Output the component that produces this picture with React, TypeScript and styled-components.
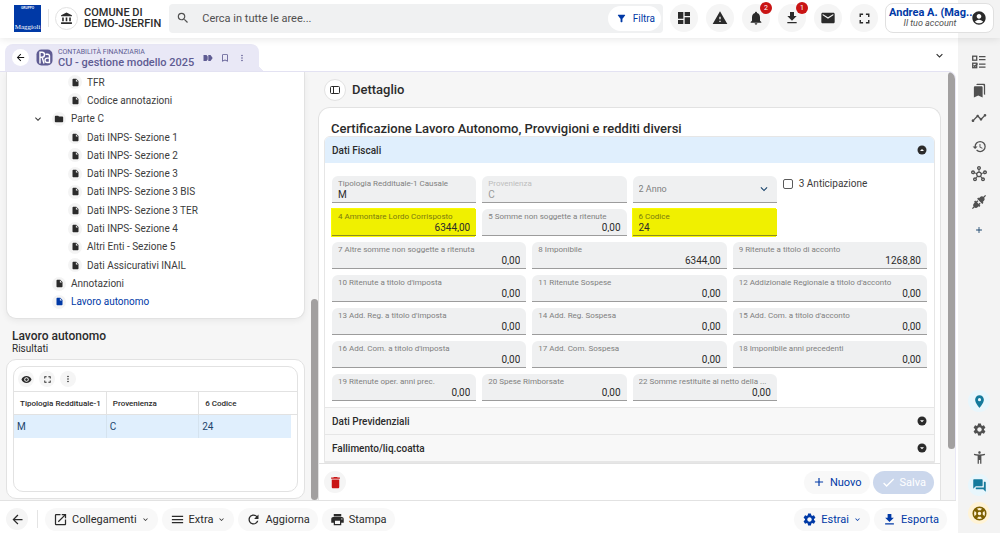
import React from "react";
import styled, { createGlobalStyle, css } from "styled-components";
import {
  MdAccountBalance, MdAccountCircle, MdAccessibilityNew, MdAdd, MdArrowBack, MdBookmarkBorder,
  MdBookmarks, MdCheck, MdDashboard, MdDelete, MdDownload, MdEmail, MdExpandMore, MdFilterAlt, MdFolder,
  MdForum, MdFullscreen, MdHistory, MdOutlineHub, MdInsertDriveFile, MdMenu, MdMoreVert,
  MdNotifications, MdOpenInNew, MdPrint, MdRefresh, MdRoom, MdSearch, MdSettings, MdTimeline,
  MdVisibility, MdWarning,
} from "react-icons/md";

const Global = createGlobalStyle`
  *, *::before, *::after { box-sizing: border-box; }
  body { margin: 0; background: #fff; color: #2b2b2b; font-family: Roboto, "Liberation Sans", sans-serif; font-size: 11px; }
  button, input, select { font: inherit; color: inherit; margin: 0; }
  button { border: 0; padding: 0; background: none; cursor: pointer; }
  h1, h2 { margin: 0; font-weight: 500; }
  ul { margin: 0; padding: 0; list-style: none; }
  a { color: inherit; text-decoration: none; }
  svg { display: block; flex: none; }
`;

const BLUE = "#0039a6";
const INDIGO = "#5f5c93";

const Shell = styled.div`
  display: flex;
  flex-direction: column;
  height: 100vh;
  min-height: 533px;
`;

/* ---------- header ---------- */
const Header = styled.header`
  position: relative;
  z-index: 1;
  display: flex;
  align-items: center;
  height: 38px;
  padding: 0 6px 2px 14px;
  background: linear-gradient(to left, #f3f3f3 42px, #fff 42px);
  box-shadow: 0 1px 8px rgba(0, 0, 0, 0.1);
`;
const Logo = styled.div`
  display: flex;
  flex-direction: column;
  justify-content: space-between;
  align-items: center;
  width: 27px;
  height: 27px;
  padding-top: 1px;
  background: ${BLUE};
  color: #fff;
  font: 700 3px/4px "Liberation Sans", sans-serif;
  overflow: hidden;
`;
const LogoName = styled.span`
  font: 7px/9px "Liberation Serif", serif;
`;
const Divider = styled.span<{ $tight?: boolean }>`
  width: 1px;
  height: 18px;
  margin: ${(p) => (p.$tight ? "0 3px 0 5px" : "0 6px 0 7px")};
  background: #e4e4e4;
`;
const Circle = styled.button<{ $size: number; $bg?: string; $outlined?: boolean }>`
  position: relative;
  display: flex;
  flex: none;
  align-items: center;
  justify-content: center;
  width: ${(p) => p.$size}px;
  height: ${(p) => p.$size}px;
  border-radius: 50%;
  background: ${(p) => p.$bg ?? "#f5f5f5"};
  ${(p) => p.$outlined && css`border: 1px solid #e2e2e2;`}
`;
const Tenant = styled.strong`
  margin: 0 8px 0 6px;
  font-size: 11px;
  line-height: 11px;
  font-weight: 500;
  white-space: nowrap;
`;
const Search = styled.label`
  display: flex;
  flex: 1;
  align-items: center;
  gap: 12px;
  height: 29px;
  padding: 0 2px 0 7px;
  border-radius: 4px;
  background: #f0f1f2;
  color: #505050;
`;
const SearchInput = styled.input`
  flex: 1;
  min-width: 0;
  padding: 0;
  border: 0;
  background: none;
  outline: 0;
  font-size: 11px;
  &::placeholder { color: #505050; opacity: 1; }
`;
const FilterButton = styled.button`
  display: flex;
  align-items: center;
  gap: 6px;
  height: 25px;
  padding: 0 6px 0 8px;
  border-radius: 13px;
  background: #fff;
  color: ${BLUE};
  font-size: 10px;
`;
const HeaderActions = styled.nav`
  display: flex;
  gap: 8px;
  margin: 0 7px;
`;
const Badge = styled.span`
  position: absolute;
  top: -2px;
  right: -2px;
  width: 12px;
  height: 12px;
  border-radius: 50%;
  background: #c91414;
  color: #fff;
  font-size: 7px;
  line-height: 12px;
  text-align: center;
`;
const Account = styled.button`
  display: flex;
  align-items: center;
  width: 109px;
  height: 30px;
  padding: 0 6px 0 3px;
  border: 1px solid #e0e0e0;
  border-radius: 8px;
  background: #fff;
`;
const AccountText = styled.span`
  display: flex;
  flex: 1;
  flex-direction: column;
  min-width: 0;
  line-height: 11px;
`;
const AccountName = styled.strong`
  color: ${BLUE};
  font-size: 11px;
  font-weight: 700;
  white-space: nowrap;
`;
const AccountHint = styled.em`
  color: #505050;
  font-size: 9px;
  text-align: center;
`;

/* ---------- frame ---------- */
const Body = styled.div`
  display: flex;
  flex: 1;
  min-height: 0;
`;
const Main = styled.div`
  display: flex;
  flex: 1;
  flex-direction: column;
  min-width: 0;
  margin-right: 2px;
`;
const TabBar = styled.div`
  display: flex;
  align-items: flex-end;
  justify-content: space-between;
  height: 33px;
  padding: 0 10px 0 5px;
`;
const Tab = styled.div`
  position: relative;
  display: flex;
  align-items: center;
  height: 27px;
  padding: 0 12px 0 7px;
  border-radius: 8px 8px 0 0;
  background: #e9e8f6;
  color: ${INDIGO};
  &::after {
    content: "";
    position: absolute;
    left: 100%;
    bottom: 0;
    width: 7px;
    height: 7px;
    background: radial-gradient(circle at top right, transparent 7px, #e9e8f6 7px);
  }
`;
const TabText = styled.div`
  margin: 0 9px 0 5px;
  line-height: 10px;
  font-size: 7px;
  white-space: nowrap;
`;
const TabTitle = styled.h1`
  font-size: 11px;
  line-height: 11px;
`;
const TabIcons = styled.div`
  display: flex;
  align-items: center;
  gap: 7px;
`;
const AppIcon = styled.span`
  display: flex;
  margin-left: 7px;
`;
const TabMenu = styled.button`
  margin-bottom: 9px;
`;
const Workspace = styled.div`
  display: flex;
  flex: 1;
  min-height: 0;
  overflow: hidden;
  border-top: 1px solid #e3e2f2;
  border-right: 1px solid #e9e8f6;
  border-top-right-radius: 8px;
  background: #f6f6f6;
`;
const ScrollTrack = styled.div<{ $end?: boolean }>`
  display: flex;
  flex: none;
  flex-direction: column;
  justify-content: ${(p) => (p.$end ? "flex-end" : "flex-start")};
  width: 7px;
`;
const ScrollThumb = styled.div<{ $share: number }>`
  height: ${(p) => p.$share}%;
  border-radius: 4px;
  background: #a2a0a0;
`;

/* ---------- left column ---------- */
const Side = styled.aside`
  display: flex;
  width: 318px;
  flex: none;
`;
const SideContent = styled.div`
  display: flex;
  flex: 1;
  flex-direction: column;
  padding: 0 6px 1px 6px;
`;
const TreeCard = styled.nav`
  padding: 1px 0 7px;
  border: 1px solid #e2e2e2;
  border-top: 0;
  border-radius: 0 0 10px 10px;
  background: #fff;
  box-shadow: 0 2px 6px rgba(0, 0, 0, 0.06);
`;
const TreeList = styled.ul`
  display: grid;
  grid-auto-rows: 1fr;
  height: 238px;
`;
const TreeRow = styled.li<{ $level: number; $active?: boolean }>`
  display: flex;
  align-items: center;
  gap: 5px;
  padding-left: ${(p) => (p.$level === 2 ? 61 : 45)}px;
  color: ${(p) => (p.$active ? BLUE : "#3c3c3c")};
  font-size: 10px;
`;
const TreeToggle = styled.button`
  margin: 0 3px 0 -20px;
`;
const TreeGlyph = styled.span<{ $active?: boolean }>`
  display: flex;
  align-items: center;
  justify-content: center;
  width: 14px;
  height: 14px;
  border-radius: 50%;
  background: #f4f4f4;
  color: ${(p) => (p.$active ? BLUE : "#2b2b2b")};
`;
const SideHeading = styled.div`
  padding: 10px 0 4px 6px;
  font-size: 10px;
  line-height: 12px;
`;
const SideTitle = styled.h2`
  font-size: 12px;
  line-height: 14px;
`;
const ResultsCard = styled.section`
  display: flex;
  flex: 1;
  padding: 6px;
  border: 1px solid #e2e2e2;
  border-radius: 10px;
  background: #fff;
`;
const ResultsBox = styled.div`
  flex: 1;
  border: 1px solid #e2e2e2;
  border-radius: 10px;
  overflow: hidden;
`;
const ResultsTools = styled.div`
  display: flex;
  gap: 5px;
  padding: 4px;
`;
const Table = styled.table`
  width: 100%;
  border-collapse: collapse;
  table-layout: fixed;
  border-top: 1px solid #e2e2e2;
`;
const Th = styled.th`
  height: 23px;
  padding: 0 0 0 6px;
  border-right: 1px solid #e2e2e2;
  border-bottom: 1px solid #e2e2e2;
  font-size: 8px;
  font-weight: 500;
  text-align: left;
  white-space: nowrap;
  overflow: hidden;
  &:nth-child(n + 3) { border-right: 0; }
`;
const Td = styled.td`
  height: 23px;
  padding: 0 0 0 3px;
  border-right: 1px solid #d5e3ef;
  background: #e0effd;
  color: #1c466e;
  font-size: 10px;
  &:nth-child(3) { border-right: 0; }
`;
const ScrollCell = styled.td`
  padding: 0;
`;

/* ---------- right column ---------- */
const Detail = styled.main`
  display: flex;
  flex: 1;
  flex-direction: column;
  min-width: 0;
`;
const DetailHead = styled.div`
  display: flex;
  align-items: center;
  gap: 6px;
  height: 35px;
  padding-left: 6px;
`;
const DetailTitle = styled.h2`
  font-size: 13px;
`;
const DetailCard = styled.section`
  display: flex;
  flex: 1;
  flex-direction: column;
  min-height: 0;
  margin-right: 7px;
  border: 1px solid #e2e2e2;
  border-bottom: 0;
  border-radius: 12px 12px 0 0;
  background: #fff;
`;
const DetailScroll = styled.div`
  flex: 1;
  min-height: 0;
  overflow: hidden;
  padding: 13px 5px 0;
`;
const FormTitle = styled.h2`
  padding-left: 7px;
  font-size: 13px;
  line-height: 15px;
`;
const Accordion = styled.div`
  border: 1px solid #e6e6e6;
  border-radius: 6px 6px 0 0;
  overflow: hidden;
`;
const AccordionHead = styled.button<{ $open?: boolean }>`
  display: flex;
  align-items: center;
  justify-content: space-between;
  width: 100%;
  height: ${(p) => (p.$open ? 26 : 27)}px;
  padding: 0 7px;
  background: ${(p) => (p.$open ? "#e0effd" : "#f8f8f8")};
  border-bottom: ${(p) => (p.$open ? "0" : "1px solid #e6e6e6")};
  font-size: 10px;
  font-weight: 500;
`;
const Form = styled.form`
  display: flex;
  flex-direction: column;
  gap: 6px;
  padding: 13px 7px 6px;
  border-bottom: 1px solid #e6e6e6;
`;
const FieldRow = styled.div<{ $cols: number }>`
  display: grid;
  grid-template-columns: repeat(${(p) => p.$cols}, minmax(0, 1fr));
  gap: 6px;
`;
const FieldBox = styled.label<{ $marked?: boolean; $disabled?: boolean }>`
  display: flex;
  flex-direction: column;
  height: 27px;
  padding: 3px 6px;
  justify-content: space-between;
  border-bottom: 1px solid #9c9c9c;
  border-radius: 6px 6px 0 0;
  background: #eff0f1;
  color: #2b2b2b;
  ${(p) => p.$disabled && css`color: #9a9a9a;`}
  ${(p) => p.$marked && css`
    border-radius: 0;
    border-bottom-color: #8e8e20;
    background: #f0f000;
    box-shadow: -1px -1px 0 #fbfb00, -1px 1px 0 #fbfb00;
  `}
`;
const FieldLabel = styled.span<{ $marked?: boolean; $disabled?: boolean }>`
  color: ${(p) => (p.$marked ? "#7a7a10" : p.$disabled ? "#bdbdbd" : "#808080")};
  font-size: 8px;
  line-height: 10px;
  white-space: nowrap;
  overflow: hidden;
  text-overflow: ellipsis;
`;
const FieldInput = styled.input<{ $right?: boolean }>`
  width: 100%;
  height: 10px;
  padding: 0;
  border: 0;
  outline: 0;
  background: none;
  font-size: 10px;
  line-height: 10px;
  text-align: ${(p) => (p.$right ? "right" : "left")};
`;
const SelectBox = styled.div`
  display: flex;
  align-items: center;
  height: 27px;
  padding: 0 6px;
  border-bottom: 1px solid #9c9c9c;
  border-radius: 6px 6px 0 0;
  background: #eff0f1;
  color: #1c466e;
`;
const Select = styled.select`
  flex: 1;
  appearance: none;
  padding: 0;
  border: 0;
  background: none;
  color: #808080;
  font-size: 9px;
`;
const CheckLabel = styled.label`
  display: flex;
  align-items: center;
  gap: 6px;
  height: 15px;
  color: #3c3c3c;
  font-size: 10px;
`;
const CheckBox = styled.input`
  appearance: none;
  width: 10px;
  height: 10px;
  border: 1px solid #5a5a5a;
  border-radius: 2px;
  background: #fff;
`;
const DetailFoot = styled.footer`
  display: flex;
  align-items: center;
  gap: 3px;
  height: 37px;
  padding: 0 6px 0 5px;
  border-top: 1px solid #e2e2e2;
`;
const Spacer = styled.span`
  flex: 1;
`;
const Pill = styled.button<{ $tone?: "blue" | "disabled" }>`
  display: flex;
  align-items: center;
  gap: 4px;
  height: 23px;
  padding: 0 8px;
  border-radius: 12px;
  background: ${(p) => (p.$tone === "disabled" ? "#cbd7ec" : "#f8f8f8")};
  color: ${(p) => (p.$tone === "blue" ? BLUE : p.$tone === "disabled" ? "#fff" : "#2b2b2b")};
  font-size: 11px;
  white-space: nowrap;
`;
const BottomBar = styled.footer`
  display: flex;
  align-items: center;
  gap: 4px;
  height: 33px;
  padding: 4px 9px 0 6px;
  border-top: 1px solid #e2e2e2;
`;

/* ---------- right rail ---------- */
const Rail = styled.nav`
  display: flex;
  flex-direction: column;
  align-items: center;
  gap: 6px;
  width: 42px;
  padding: 13px 0 9px;
  background: #f3f3f3;
  color: #505050;
`;

type FieldProps = { label: string; value: string; left?: boolean; marked?: boolean; disabled?: boolean };
const Field = ({ label, value, left, marked, disabled }: FieldProps) => (
  <FieldBox $marked={marked} $disabled={disabled}>
    <FieldLabel $marked={marked} $disabled={disabled}>{label}</FieldLabel>
    <FieldInput $right={!left} defaultValue={value} disabled={disabled} />
  </FieldBox>
);

const AppGlyph = () => (
  <svg width="17" height="17" viewBox="0 0 17 17" fill="none">
    <rect x="0.5" y="0.5" width="16" height="16" rx="5" fill={INDIGO} />
    <g stroke="#fff" strokeWidth="1.4">
      <path d="M4 14.500V3.200H6a2.300 2.300 0 0 1 0 5H4M6.200 8.500L8 14.500" />
      <path d="M9.500 5.200h2.200a1.800 1.800 0 0 1 1.800 1.800V13.500h-2.300a2.200 2.200 0 0 1 0-4.400h2.300" />
    </g>
  </svg>
);
const DoubleTagGlyph = () => (
  <svg width="10" height="10" viewBox="0 0 10 10" fill="currentColor">
    <path d="M0.500 2h3l1.200 1.500v3L3.500 8h-3zM5.300 2h2.200L9.700 5 7.500 8H5.300z" />
  </svg>
);
const TaskListGlyph = () => (
  <svg width="16" height="16" viewBox="0 0 16 16" fill="none" stroke="currentColor" strokeWidth="1.300">
    <rect x="1.700" y="2.200" width="4" height="4" />
    <rect x="1.700" y="9.200" width="4" height="4.500" />
    <path d="M2.500 11.300l1.200 1.200L6.500 9.500M8 2.700h6.500M8 5.700h6.500M8 10.200h6.500M8 13.200h6.500" />
  </svg>
);
const PlugGlyph = () => (
  <svg width="16" height="16" viewBox="0 0 24 24" fill="currentColor">
    <g transform="rotate(45 12 12)">
      <rect x="11" y="-2" width="2" height="6" />
      <path d="M8 8V6a4 4 0 0 1 8 0v2h1.500v2.500h-11V8z" />
      <rect x="8.500" y="12" width="2" height="4" />
      <rect x="13.500" y="12" width="2" height="4" />
      <path d="M6.500 14.500h11V17H16v1.500a4 4 0 0 1-8 0V17H6.500z" />
      <rect x="11" y="20" width="2" height="6" />
    </g>
  </svg>
);
const PanelGlyph = () => (
  <svg width="10" height="10" viewBox="0 0 10 10" fill="none" stroke="#2b2b2b">
    <rect x="0.500" y="1.500" width="9" height="7" rx="1" />
    <path d="M3.500 1.500v7" />
  </svg>
);
const CaretGlyph = ({ up }: { up?: boolean }) => (
  <svg width="10" height="10" viewBox="0 0 10 10">
    <circle cx="5" cy="5" r="4.500" fill="#2b2b2b" />
    <path d={up ? "M3 6l2-2 2 2z" : "M3 4.300h4l-2 2z"} fill="#fff" />
  </svg>
);
const LifebuoyGlyph = () => (
  <svg width="15" height="15" viewBox="0 0 24 24" fill="none" stroke="#7d6000">
    <circle cx="12" cy="12" r="10" strokeWidth="2.500" />
    <circle cx="12" cy="12" r="4" strokeWidth="2.500" />
    <path d="M5 5l4 4M19 5l-4 4M5 19l4-4M19 19l-4-4" strokeWidth="5" />
  </svg>
);

const tree = [
  { label: "TFR", level: 2 },
  { label: "Codice annotazioni", level: 2 },
  { label: "Parte C", level: 1, folder: true },
  { label: "Dati INPS- Sezione 1", level: 2 },
  { label: "Dati INPS- Sezione 2", level: 2 },
  { label: "Dati INPS- Sezione 3", level: 2 },
  { label: "Dati INPS- Sezione 3 BIS", level: 2 },
  { label: "Dati INPS- Sezione 3 TER", level: 2 },
  { label: "Dati INPS- Sezione 4", level: 2 },
  { label: "Altri Enti - Sezione 5", level: 2 },
  { label: "Dati Assicurativi INAIL", level: 2 },
  { label: "Annotazioni", level: 1 },
  { label: "Lavoro autonomo", level: 1, active: true },
];

const amounts: [string, string][][] = [
  [["7 Altre somme non soggette a ritenuta", "0,00"], ["8 Imponibile", "6344,00"], ["9 Ritenute a titolo di acconto", "1268,80"]],
  [["10 Ritenute a titolo d'imposta", "0,00"], ["11 Ritenute Sospese", "0,00"], ["12 Addizionale Regionale a titolo d'acconto", "0,00"]],
  [["13 Add. Reg. a titolo d'imposta", "0,00"], ["14 Add. Reg. Sospesa", "0,00"], ["15 Add. Com. a titolo d'acconto", "0,00"]],
  [["16 Add. Com. a titolo d'imposta", "0,00"], ["17 Add. Com. Sospesa", "0,00"], ["18 Imponibile anni precedenti", "0,00"]],
];

export default function App() {
  return (
    <Shell>
      <Global />
      <Header>
        <Logo>GRUPPO<LogoName>Maggioli</LogoName></Logo>
        <Divider />
        <Circle $size={23} $bg="#fff" $outlined aria-label="Ente"><MdAccountBalance size={13} /></Circle>
        <Tenant>COMUNE DI<br />DEMO-JSERFIN</Tenant>
        <Search>
          <MdSearch size={14} />
          <SearchInput placeholder="Cerca in tutte le aree..." aria-label="Cerca" />
          <FilterButton type="button"><MdFilterAlt size={11} />Filtra</FilterButton>
        </Search>
        <HeaderActions>
          <Circle $size={28} aria-label="Cruscotto"><MdDashboard size={16} /></Circle>
          <Circle $size={28} aria-label="Avvisi"><MdWarning size={16} /></Circle>
          <Circle $size={28} aria-label="Notifiche"><MdNotifications size={16} /><Badge>2</Badge></Circle>
          <Circle $size={28} aria-label="Download"><MdDownload size={16} /><Badge>1</Badge></Circle>
          <Circle $size={28} aria-label="Messaggi"><MdEmail size={16} /></Circle>
          <Circle $size={28} aria-label="Schermo intero"><MdFullscreen size={17} /></Circle>
        </HeaderActions>
        <Account>
          <AccountText>
            <AccountName>Andrea A. (Mag...</AccountName>
            <AccountHint>Il tuo account</AccountHint>
          </AccountText>
          <MdAccountCircle size={16} />
        </Account>
      </Header>

      <Body>
        <Main>
          <TabBar>
            <Tab>
              <Circle $size={17} $bg="#fff" aria-label="Indietro"><MdArrowBack size={11} color="#111" /></Circle>
              <AppIcon><AppGlyph /></AppIcon>
              <TabText>CONTABILITÀ FINANZIARIA<TabTitle>CU - gestione modello 2025</TabTitle></TabText>
              <TabIcons>
                <DoubleTagGlyph />
                <MdBookmarkBorder size={10} />
                <MdMoreVert size={10} />
              </TabIcons>
            </Tab>
            <TabMenu aria-label="Apri schede"><MdExpandMore size={13} /></TabMenu>
          </TabBar>

          <Workspace>
            <Side>
              <SideContent>
                <TreeCard>
                  <TreeList>
                    {tree.map((n) => (
                      <TreeRow key={n.label} $level={n.level} $active={n.active}>
                        {n.folder && <TreeToggle aria-label="Comprimi"><MdExpandMore size={12} /></TreeToggle>}
                        <TreeGlyph $active={n.active}>
                          {n.folder ? <MdFolder size={10} /> : <MdInsertDriveFile size={9} />}
                        </TreeGlyph>
                        <a href="#">{n.label}</a>
                      </TreeRow>
                    ))}
                  </TreeList>
                </TreeCard>
                <SideHeading><SideTitle>Lavoro autonomo</SideTitle>Risultati</SideHeading>
                <ResultsCard>
                  <ResultsBox>
                    <ResultsTools>
                      <Circle $size={16} aria-label="Visualizza"><MdVisibility size={11} /></Circle>
                      <Circle $size={16} aria-label="Espandi"><MdFullscreen size={11} /></Circle>
                      <Circle $size={16} aria-label="Altro"><MdMoreVert size={10} /></Circle>
                    </ResultsTools>
                    <Table>
                      <colgroup><col /><col /><col /><col width="6" /></colgroup>
                      <thead><tr><Th>Tipologia Reddituale-1</Th><Th>Provenienza</Th><Th>6 Codice</Th><Th aria-hidden /></tr></thead>
                      <tbody><tr><Td>M</Td><Td>C</Td><Td>24</Td><ScrollCell /></tr></tbody>
                    </Table>
                  </ResultsBox>
                </ResultsCard>
              </SideContent>
              <ScrollTrack $end><ScrollThumb $share={47} /></ScrollTrack>
            </Side>

            <Detail>
              <DetailHead>
                <Circle $size={22} $bg="#fff" $outlined aria-label="Pannello"><PanelGlyph /></Circle>
                <DetailTitle>Dettaglio</DetailTitle>
              </DetailHead>
              <DetailCard>
                <DetailScroll>
                  <FormTitle>Certificazione Lavoro Autonomo, Provvigioni e redditi diversi</FormTitle>
                  <Accordion>
                    <AccordionHead $open>Dati Fiscali<CaretGlyph up /></AccordionHead>
                    <Form>
                      <FieldRow $cols={4}>
                        <Field label="Tipologia Reddituale-1 Causale" value="M" left />
                        <Field label="Provenienza" value="C" left disabled />
                        <SelectBox>
                          <Select aria-label="2 Anno"><option>2 Anno</option></Select>
                          <MdExpandMore size={14} />
                        </SelectBox>
                        <CheckLabel><CheckBox type="checkbox" />3 Anticipazione</CheckLabel>
                      </FieldRow>
                      <FieldRow $cols={4}>
                        <Field label="4 Ammontare Lordo Corrisposto" value="6344,00" marked />
                        <Field label="5 Somme non soggette a ritenute" value="0,00" />
                        <Field label="6 Codice" value="24" left marked />
                      </FieldRow>
                      {amounts.map((row, i) => (
                        <FieldRow key={i} $cols={3}>
                          {row.map(([label, value]) => <Field key={label} label={label} value={value} />)}
                        </FieldRow>
                      ))}
                      <FieldRow $cols={4}>
                        <Field label="19 Ritenute oper. anni prec." value="0,00" />
                        <Field label="20 Spese Rimborsate" value="0,00" />
                        <Field label="22 Somme restituite al netto della ..." value="0,00" />
                      </FieldRow>
                    </Form>
                    <AccordionHead>Dati Previdenziali<CaretGlyph /></AccordionHead>
                    <AccordionHead>Fallimento/liq.coatta<CaretGlyph /></AccordionHead>
                  </Accordion>
                </DetailScroll>
                <DetailFoot>
                  <Circle $size={22} aria-label="Elimina"><MdDelete size={15} color="#c91414" /></Circle>
                  <Spacer />
                  <Pill $tone="blue"><MdAdd size={14} />Nuovo</Pill>
                  <Pill $tone="disabled" disabled><MdCheck size={15} />Salva</Pill>
                </DetailFoot>
              </DetailCard>
            </Detail>
            <ScrollTrack><ScrollThumb $share={88} /></ScrollTrack>
          </Workspace>

          <BottomBar>
            <Circle $size={22} aria-label="Torna indietro"><MdArrowBack size={15} /></Circle>
            <Divider $tight />
            <Pill><MdOpenInNew size={15} />Collegamenti<MdExpandMore size={9} /></Pill>
            <Pill><MdMenu size={15} />Extra<MdExpandMore size={9} /></Pill>
            <Pill><MdRefresh size={15} />Aggiorna</Pill>
            <Pill><MdPrint size={15} />Stampa</Pill>
            <Spacer />
            <Pill $tone="blue"><MdSettings size={15} />Estrai<MdExpandMore size={9} /></Pill>
            <Pill $tone="blue"><MdDownload size={15} />Esporta</Pill>
          </BottomBar>
        </Main>

        <Rail>
          <Circle $size={22} $bg="none" aria-label="Attività"><TaskListGlyph /></Circle>
          <Circle $size={22} $bg="none" aria-label="Segnalibri"><MdBookmarks size={15} /></Circle>
          <Circle $size={22} $bg="none" aria-label="Andamento"><MdTimeline size={16} /></Circle>
          <Circle $size={22} $bg="none" aria-label="Cronologia"><MdHistory size={15} /></Circle>
          <Circle $size={22} $bg="none" aria-label="Relazioni"><MdOutlineHub size={16} /></Circle>
          <Circle $size={22} $bg="none" aria-label="Connessioni"><PlugGlyph /></Circle>
          <Circle $size={22} $bg="none" aria-label="Aggiungi"><MdAdd size={10} color="#1c466e" /></Circle>
          <Spacer />
          <Circle $size={22} $bg="#e8f6fc" aria-label="Posizione"><MdRoom size={15} color="#147a9c" /></Circle>
          <Circle $size={22} $bg="none" aria-label="Impostazioni"><MdSettings size={15} /></Circle>
          <Circle $size={22} $bg="none" aria-label="Accessibilità"><MdAccessibilityNew size={15} /></Circle>
          <Circle $size={22} $bg="#e8f6fc" aria-label="Chat"><MdForum size={15} color="#147a9c" /></Circle>
          <Circle $size={22} $bg="#fff3d6" aria-label="Assistenza"><LifebuoyGlyph /></Circle>
        </Rail>
      </Body>
    </Shell>
  );
}
